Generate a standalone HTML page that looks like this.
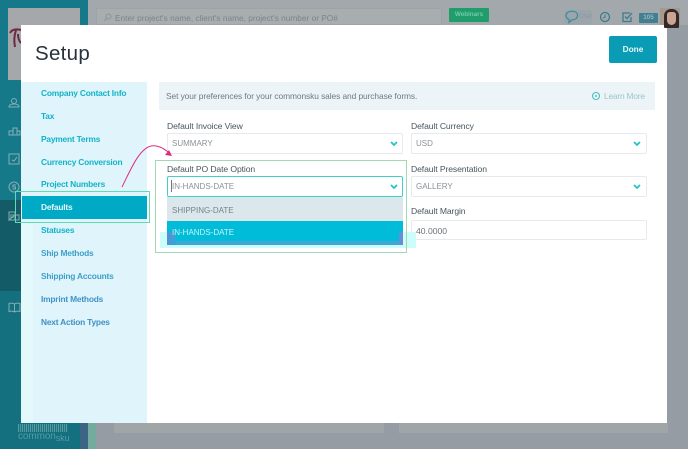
<!DOCTYPE html>
<html><head><meta charset="utf-8">
<style>
html,body{margin:0;padding:0}
body{width:688px;height:449px;overflow:hidden;position:relative;background:#959ca3;font-family:"Liberation Sans",sans-serif}
div,span{position:absolute;box-sizing:border-box;white-space:nowrap}
#w{left:0;top:0;width:688px;height:449px;filter:blur(.35px)}
.nav{left:41px;font-size:8.4px;font-weight:700;color:#12b3c8;line-height:12px;letter-spacing:-.2px}
.lab{font-size:8.6px;color:#46565f;line-height:12px;letter-spacing:-.1px}
.sel{background:#fff;border:1px solid #e6eaec;border-radius:2px;height:21px}
.val{font-size:8px;color:#8b9296;line-height:12px}
svg{position:absolute}
</style></head><body><div id="w">
<!-- background -->
<div style="left:88px;top:0;width:600px;height:449px;background:#959ca3"></div>
<div style="left:88px;top:0;width:600px;height:25px;background:#a3a8ac"></div>
<div style="left:0;top:0;width:88px;height:449px;background:#14707e"></div>
<div style="left:0;top:0;width:88px;height:200px;background:#15798a"></div>
<div style="left:0;top:200px;width:21px;height:91px;background:#135b67"></div>
<div style="left:80px;top:423px;width:8px;height:26px;background:#3c6585"></div>
<div style="left:88px;top:423px;width:8px;height:26px;background:#74ab9e"></div>
<div style="left:8px;top:8px;width:72px;height:72px;background:#a6a7ab"></div>
<svg style="left:8px;top:26px" width="14" height="24" viewBox="0 0 14 24"><path d="M2 7C4 3 9 3 13 4M8 4C6 10 6 16 7 21M10 8C10 12 11 15 13 17" fill="none" stroke="#6b2c40" stroke-width="2"/></svg>
<div style="left:96px;top:8px;width:346px;height:17px;background:#a8adb0;border:1px solid #9ea3a6"></div>
<div style="left:115px;top:12px;font-size:8.3px;line-height:12px;color:#7d8488">Enter project's name, client's name, project's number or PO#</div>
<svg style="left:103px;top:13px" width="9" height="9" viewBox="0 0 9 9"><circle cx="5.500" cy="3.500" r="2.500" fill="none" stroke="#8c9397"/><path d="M3.500 5.500L1 8" stroke="#8c9397"/></svg>
<div style="left:449px;top:8px;width:40px;height:14px;background:#1f9e6c;border-radius:1px;color:#79c7a6;font-size:6.300px;font-weight:700;line-height:14px;text-align:center">Webinars</div>
<div style="left:564px;top:10px;width:28px;height:14px;background:#9aa6ab;border-radius:3px"></div>
<svg style="left:564px;top:10px" width="16" height="14" viewBox="0 0 16 14"><path d="M8 1.200C11.500 1.200 13.500 3 13.500 5.500S11.500 9.800 8 9.800L5 12.500V9.300C3 8.700 2 7.300 2 5.500 2 3 4.500 1.200 8 1.200Z" fill="none" stroke="#3a8a99" stroke-width="1.200"/></svg>
<div style="left:579px;top:12px;font-size:6px;color:#8a979c;line-height:10px">Chat</div>
<svg style="left:599px;top:11px" width="12" height="12" viewBox="0 0 12 12"><circle cx="6" cy="6" r="4.500" fill="none" stroke="#3a7d8c" stroke-width="1.300"/><path d="M6 3.500V6.300L4 7" fill="none" stroke="#3a7d8c"/></svg>
<svg style="left:621px;top:11px" width="12" height="12" viewBox="0 0 12 12"><path d="M9 2H2V10.500H10V6" fill="none" stroke="#3a7d8c" stroke-width="1.300"/><path d="M4 5.500L6 7.500 11 2" fill="none" stroke="#3a7d8c" stroke-width="1.300"/></svg>
<div style="left:639px;top:13px;width:19px;height:10px;background:#417f93;border-radius:1px;color:#9fb6bd;font-size:6.300px;font-weight:700;line-height:10px;text-align:center">105</div>
<!-- left icons -->
<svg style="left:8px;top:97px" width="13" height="130" viewBox="0 0 13 130" fill="none" stroke="#86adb5" stroke-width="1">
<circle cx="6" cy="4" r="2.500"/><path d="M1 10C1 7.500 3 7 6 7S11 7.500 11 10H1Z"/>
<path d="M1 38H12V34H9V31H5V34H1ZM5 34V38M9 34V38"/>
<rect x="1" y="57" width="10" height="10"/><path d="M4 63L6 64 9 60"/>
<circle cx="6" cy="90" r="5"/><path d="M8 88H5V90H7.500V92H4.500"/>
<path d="M1 123V115H7V123M7 118H11V123H1ZM3 117V121M5 117V121"/>
</svg>
<svg style="left:8px;top:302px" width="13" height="11" viewBox="0 0 13 11" fill="none" stroke="#86adb5"><path d="M6.500 2C5 1 2.500 1 1 1.500V9.500C2.500 9 5 9 6.500 10 8 9 10.500 9 12 9.500V1.500C10.500 1 8 1 6.500 2ZM6.500 2V10"/></svg>
<!-- barcode logo -->
<div style="left:18px;top:424px;width:50px;height:8px;background:repeating-linear-gradient(90deg,#5a9aa3 0 1px,#1c7682 1px 2px,#4f939d 2px 3px,#1c7682 3px 4px)"></div>
<div style="left:18px;top:431px;font-size:10px;line-height:12px;color:#559aa6;letter-spacing:-.1px">common<span style="position:static;font-size:9px;vertical-align:-2px">sku</span></div>
<!-- bottom background cards -->
<div style="left:114px;top:423px;width:270px;height:10px;background:#a0a5a7"></div>
<div style="left:399px;top:423px;width:269px;height:10px;background:#a0a5a7"></div>
<!-- modal -->
<div style="left:21px;top:25px;width:646px;height:398px;background:#fff"></div>
<div style="left:660px;top:8px;width:20px;height:17px;background:#a69a8c"></div>
<div style="left:664px;top:9px;width:15px;height:19px;background:#32282a;border-radius:7px 7px 1px 1px"></div>
<div style="left:667px;top:12px;width:9px;height:13px;background:#c9a592;border-radius:3px 3px 5px 5px"></div>
<div style="left:35px;top:41px;font-size:20.500px;line-height:26px;color:#27333b;letter-spacing:.3px">Setup</div>
<div style="left:609px;top:36px;width:48px;height:27px;background:#0a9cb4;border-radius:2px;color:#e8f6f8;font-size:8.300px;font-weight:700;line-height:26px;text-align:center">Done</div>
<!-- sidebar -->
<div style="left:21px;top:82px;width:126px;height:341px;background:#e0f5fb"></div>
<div style="left:21px;top:222px;width:12px;height:201px;background:#e3f9fc"></div>
<div style="left:22px;top:196px;width:125px;height:23px;background:#00a9c5"></div>
<div class="nav" style="top:87px">Company Contact Info</div>
<div class="nav" style="top:110px">Tax</div>
<div class="nav" style="top:133px">Payment Terms</div>
<div class="nav" style="top:156px">Currency Conversion</div>
<div class="nav" style="top:178px">Project Numbers</div>
<div class="nav" style="top:201px;color:#e6f8fb">Defaults</div>
<div class="nav" style="top:224px">Statuses</div>
<div class="nav" style="top:247px;color:#3f9fc8">Ship Methods</div>
<div class="nav" style="top:270px;color:#3f9fc8">Shipping Accounts</div>
<div class="nav" style="top:293px;color:#3f93c8">Imprint Methods</div>
<div class="nav" style="top:316px;color:#3f8fc4">Next Action Types</div>
<div style="left:15px;top:191px;width:135px;height:32px;border:1px solid #5fdcb4"></div>
<!-- banner -->
<div style="left:159px;top:82px;width:496px;height:28px;background:#edf4f7"></div>
<div style="left:166px;top:90px;font-size:8.400px;line-height:12px;color:#6d7a82;letter-spacing:-.08px">Set your preferences for your commonsku sales and purchase forms.</div>
<svg style="left:591px;top:91px" width="10" height="10" viewBox="0 0 10 10"><circle cx="5" cy="5" r="3.500" fill="none" stroke="#4fbcc0" stroke-width="1.100"/><circle cx="5" cy="5" r="1" fill="#4fbcc0"/></svg>
<div style="left:604px;top:90px;font-size:8.400px;line-height:12px;color:#98c7ce;letter-spacing:-.2px">Learn More</div>
<!-- form -->
<div class="lab" style="left:167px;top:120px">Default Invoice View</div>
<div class="sel" style="left:167px;top:133px;width:236px"></div>
<div class="val" style="left:172px;top:138px">SUMMARY</div>
<div class="lab" style="left:411px;top:120px">Default Currency</div>
<div class="sel" style="left:411px;top:133px;width:236px"></div>
<div class="val" style="left:416px;top:138px">USD</div>
<div class="lab" style="left:411px;top:163px">Default Presentation</div>
<div class="sel" style="left:411px;top:176px;width:236px"></div>
<div class="val" style="left:416px;top:181px">GALLERY</div>
<div class="lab" style="left:411px;top:205px">Default Margin</div>
<div class="sel" style="left:411px;top:220px;width:236px;height:20px"></div>
<div class="val" style="left:416px;top:225px;color:#6b7479;font-size:8.600px">40.0000</div>
<!-- highlight -->
<div style="left:160px;top:232px;width:256px;height:16px;background:#ccfdfb"></div>
<div style="left:155px;top:160px;width:252px;height:93px;border:1px solid #a3d8b4"></div>
<div class="lab" style="left:167px;top:163px">Default PO Date Option</div>
<div style="left:167px;top:176px;width:236px;height:21px;background:#fff;border:1px solid #3fd0cc;border-radius:2px"></div>
<div style="left:171px;top:180px;width:1px;height:12px;background:#777"></div>
<div class="val" style="left:172px;top:181px">IN-HANDS-DATE</div>
<div style="left:167px;top:197px;width:236px;height:24px;background:#dce7ec"></div>
<div class="val" style="left:172px;top:205px;color:#75838b">SHIPPING-DATE</div>
<div style="left:167px;top:221px;width:236px;height:24px;background:#00bcd9;border-radius:0 0 2px 2px"></div>
<div style="left:167px;top:232px;width:9px;height:13px;background:linear-gradient(90deg,#5b8fd6,#2fa8d8)"></div>
<div style="left:399px;top:232px;width:4px;height:13px;background:#6a8bd6"></div>
<div style="left:176px;top:241px;width:223px;height:4px;background:#3ea7d6"></div>
<div class="val" style="left:172px;top:227px;color:#c6f4f6">IN-HANDS-DATE</div>
<!-- chevrons -->
<svg style="left:0;top:0" width="688" height="449" fill="none" stroke="#1fc4c4" stroke-width="1.700">
<path d="M391 142L394 145 397 142M634 142L637 145 640 142M391 185L394 188 397 185M634 185L637 188 640 185"/>
</svg>
<!-- arrow -->
<svg style="left:0;top:0" width="688" height="449" fill="none">
<path d="M122 187C131 169 139 149 151 146C158 145 163 148 168 152" stroke="#dc2d7d" stroke-width="1"/>
<path d="M172 156L165 155 169 150Z" fill="#dc2d7d"/>
</svg>
</div></body></html>
